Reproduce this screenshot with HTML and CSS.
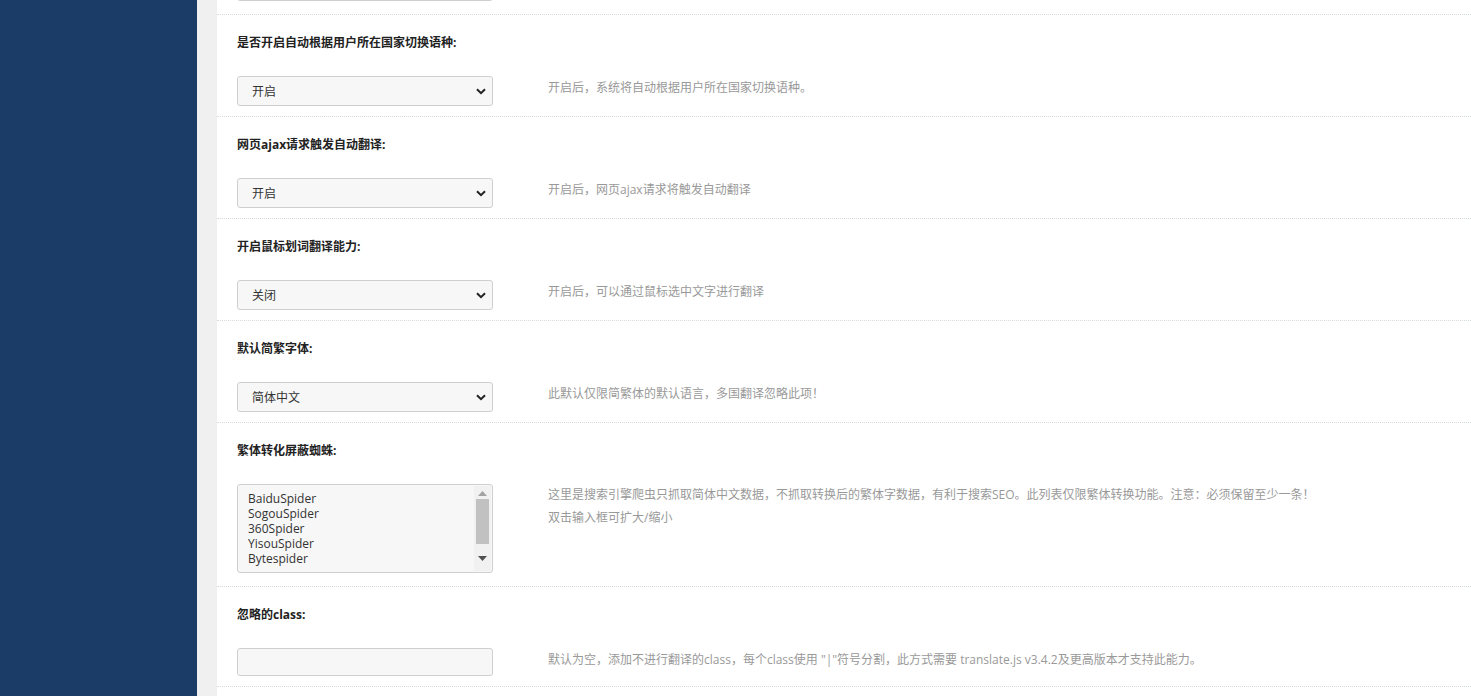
FILE: index.html
```html
<!DOCTYPE html>
<html lang="zh-CN">
<head>
<meta charset="utf-8">
<title>设置</title>
<link rel="stylesheet" href="styles.css">
</head>
<body>
<div class="layout">
  <aside class="sidebar"></aside>
  <div class="gutter"></div>
  <main class="content">
    <div class="partial"><div class="box box--input"></div></div>

    <section class="row">
      <div class="label">是否开启自动根据用户所在国家切换语种:</div>
      <div class="line">
        <div class="field">
          <div class="select"><span>开启</span><svg class="chev" width="10" height="7" viewBox="0 0 10 7"><path d="M1 1.2 L5 5.2 L9 1.2" fill="none" stroke="#222" stroke-width="2"/></svg></div>
        </div>
        <div class="desc">开启后，系统将自动根据用户所在国家切换语种。</div>
      </div>
    </section>

    <section class="row">
      <div class="label">网页ajax请求触发自动翻译:</div>
      <div class="line">
        <div class="field">
          <div class="select"><span>开启</span><svg class="chev" width="10" height="7" viewBox="0 0 10 7"><path d="M1 1.2 L5 5.2 L9 1.2" fill="none" stroke="#222" stroke-width="2"/></svg></div>
        </div>
        <div class="desc">开启后，网页ajax请求将触发自动翻译</div>
      </div>
    </section>

    <section class="row">
      <div class="label">开启鼠标划词翻译能力:</div>
      <div class="line">
        <div class="field">
          <div class="select"><span>关闭</span><svg class="chev" width="10" height="7" viewBox="0 0 10 7"><path d="M1 1.2 L5 5.2 L9 1.2" fill="none" stroke="#222" stroke-width="2"/></svg></div>
        </div>
        <div class="desc">开启后，可以通过鼠标选中文字进行翻译</div>
      </div>
    </section>

    <section class="row">
      <div class="label">默认简繁字体:</div>
      <div class="line">
        <div class="field">
          <div class="select"><span>简体中文</span><svg class="chev" width="10" height="7" viewBox="0 0 10 7"><path d="M1 1.2 L5 5.2 L9 1.2" fill="none" stroke="#222" stroke-width="2"/></svg></div>
        </div>
        <div class="desc">此默认仅限简繁体的默认语言，多国翻译忽略此项！</div>
      </div>
    </section>

    <section class="row row--tall">
      <div class="label">繁体转化屏蔽蜘蛛:</div>
      <div class="line">
        <div class="field">
          <div class="textarea">
            <div class="ta-text">BaiduSpider<br>SogouSpider<br>360Spider<br>YisouSpider<br>Bytespider</div>
            <div class="scrollbar">
              <svg width="9" height="5" viewBox="0 0 9 5"><path d="M0 5 L4.5 0 L9 5 Z" fill="#a3a3a3"/></svg>
              <div class="thumb"></div>
              <svg class="down" width="9" height="5" viewBox="0 0 9 5"><path d="M0 0 L4.5 5 L9 0 Z" fill="#505050"/></svg>
            </div>
          </div>
        </div>
        <div class="desc desc--multi">这里是搜索引擎爬虫只抓取简体中文数据，不抓取转换后的繁体字数据，有利于搜索SEO。此列表仅限繁体转换功能。注意：必须保留至少一条！<br>双击输入框可扩大/缩小</div>
      </div>
    </section>

    <section class="row row--last">
      <div class="label">忽略的class:</div>
      <div class="line">
        <div class="field">
          <div class="box box--input"></div>
        </div>
        <div class="desc">默认为空，添加不进行翻译的class，每个class使用 "|"符号分割，此方式需要 translate.js v3.4.2及更高版本才支持此能力。</div>
      </div>
    </section>
  </main>
</div>
</body>
</html>
```

FILE: styles.css
```css
* { box-sizing: border-box; }
html, body { margin: 0; padding: 0; }
body {
  font-family: "Open Sans", "Noto Sans CJK SC", sans-serif;
  font-size: 12px;
  color: #23282d;
  background: #fff;
  overflow: hidden;
}
.layout {
  display: flex;
  height: 696px;
}
.sidebar {
  width: 197px;
  flex: none;
  background: #1a3c66;
}
.gutter {
  width: 20px;
  flex: none;
  background: #f0f0f1;
}
.content {
  flex: 1;
  background: #fff;
}
.partial {
  height: 14px;
  overflow: hidden;
  padding-left: 20px;
}
.partial .box--input {
  margin-top: -27px;
}
.row {
  border-top: 1px dotted #d5dcdc;
  padding: 20px 0 10px 20px;
}
.row--tall { padding-bottom: 13px; }
.row--last { border-bottom: 1px dotted #d5dcdc; }
.label {
  font-weight: 700;
  line-height: 16px;
  height: 16px;
  color: #222;
  font-size: 12px;
}
.line {
  display: flex;
  align-items: flex-start;
  margin-top: 25px;
}
.field {
  width: 311px;
  flex: none;
}
.select {
  position: relative;
  width: 256px;
  height: 30px;
  border: 1px solid #cfcfcf;
  border-radius: 3px;
  background: #f7f7f7;
  display: flex;
  align-items: center;
  padding-left: 14px;
  color: #333;
  font-size: 12px;
}
.chev {
  position: absolute;
  right: 6px;
  top: 11px;
}
.box {
  width: 256px;
  border: 1px solid #cfcfcf;
  border-radius: 3px;
  background: #f7f7f7;
}
.box--input { height: 28px; }
.textarea {
  position: relative;
  width: 256px;
  height: 89px;
  border: 1px solid #cfcfcf;
  border-radius: 3px;
  background: #f7f7f7;
  display: flex;
}
.ta-text {
  flex: 1;
  padding: 6px 0 0 10px;
  font-family: "Open Sans", sans-serif;
  font-size: 12px;
  line-height: 15px;
  color: #333;
}
.scrollbar {
  width: 17px;
  flex: none;
  background: #f1f1f1;
  margin: 1px 1px 1px 0;
  display: flex;
  flex-direction: column;
  align-items: center;
  padding-top: 5px;
}
.thumb {
  width: 13px;
  height: 45px;
  background: #c1c1c1;
  margin-top: 3px;
}
.scrollbar .down {
  margin-top: 12px;
}
.desc {
  color: #999;
  font-size: 12px;
  line-height: 23px;
}
.desc--multi {
  margin-top: -1px;
}
```
